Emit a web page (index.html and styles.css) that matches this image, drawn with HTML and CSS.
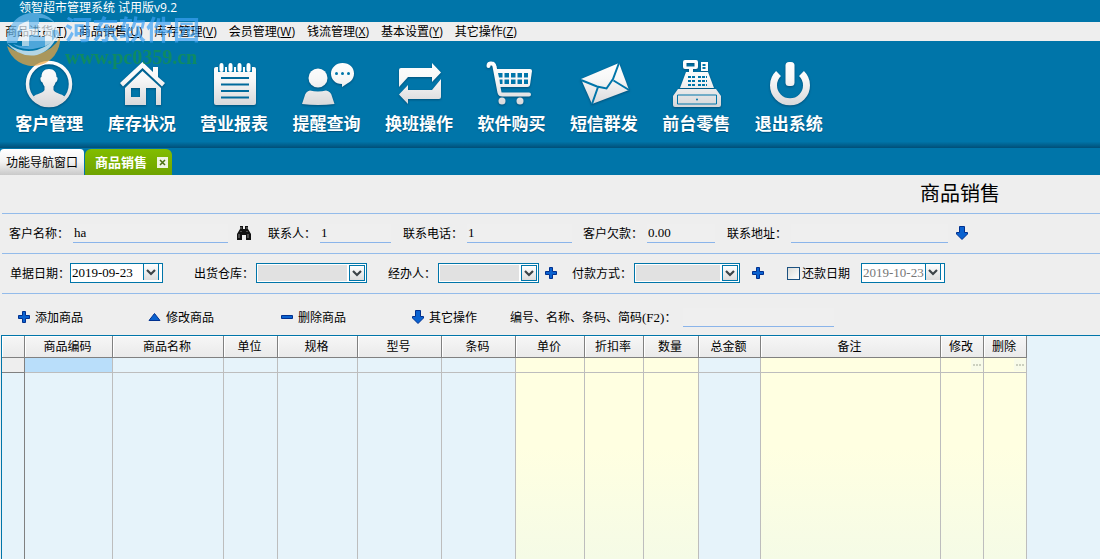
FILE: index.html
```html
<!DOCTYPE html>
<html lang="zh-CN">
<head>
<meta charset="utf-8">
<title>领智超市管理系统</title>
<link rel="stylesheet" href="styles.css">
</head>
<body>
<svg class="defs" aria-hidden="true">
  <defs>
    <linearGradient id="silver" gradientUnits="userSpaceOnUse" x1="0" y1="0" x2="0" y2="48"><stop offset="0" stop-color="#fff"/><stop offset=".4" stop-color="#f8f8f8"/><stop offset="1" stop-color="#d6d6d8"/></linearGradient>
    <symbol id="plus" viewBox="0 0 12 12"><path d="M4.500.5h3v4h4v3h-4v4h-3v-4h-4v-3h4z" fill="#0a62d0" stroke="#00308f"/></symbol>
    <symbol id="minus" viewBox="0 0 12 12"><path d="M.5 4.500h11v3H.5z" fill="#0a62d0" stroke="#00308f"/></symbol>
    <symbol id="up" viewBox="0 0 13 12"><path d="M6.500 2.500l5.500 7H1z" fill="#0a62d0" stroke="#00308f"/></symbol>
    <symbol id="down" viewBox="0 0 12 14"><path d="M3.500.5h5v6h3v1.500L6 13.500.5 8V6.500h3z" fill="#0a62d0" stroke="#00308f"/></symbol>
    <symbol id="chevron" viewBox="0 0 10 7"><path d="M1 1l4 4 4-4" fill="none" stroke="#3d4448" stroke-width="2.200"/></symbol>
  </defs>
</svg>

<header class="titlebar">领智超市管理系统 试用版v9.2</header>
<nav class="menubar">
  <button>商品进货(<u>T</u>)</button>
  <button>商品销售(<u>U</u>)</button>
  <button>库存管理(<u>V</u>)</button>
  <button>会员管理(<u>W</u>)</button>
  <button>钱流管理(<u>X</u>)</button>
  <button>基本设置(<u>Y</u>)</button>
  <button>其它操作(<u>Z</u>)</button>
</nav>

<div class="ribbon">
  <div class="ribbon-items">
    <button><svg viewBox="0 0 56 50"><circle cx="28" cy="25" r="21.500" fill="none" stroke="url(#silver)" stroke-width="3.500"/><path d="M28 10c5 0 7.500 3 7.500 8 2 0 1 5-1 5.500-.5 2-1.500 3-2 4V31c1 3 9 4 11 6.500C40 43 35 46.500 28 46.500S16 43 12.500 37.500c2-2.500 10-3.500 11-6.500v-3.500c-.5-1-1.500-2-2-4-2-.5-3-5.500-1-5.500 0-5 2.500-8 7.500-8z" fill="url(#silver)"/></svg><span>客户管理</span></button>
    <button><svg viewBox="0 0 56 50"><path fill="url(#silver)" d="M28.500 3L39 13V8h5v10l7 6-3 3.500L28.500 9 9 27.500 6 24z"/><path fill="url(#silver)" fill-rule="evenodd" d="M28.500 12L47 29v17h-5V29h-10v17H11V29zM17 29v9h9v-9z"/></svg><span>库存状况</span></button>
    <button><svg viewBox="0 0 56 50"><rect x="8" y="8" width="42" height="38" rx="2" fill="url(#silver)"/><g stroke="#0075a9" stroke-width="7"><path d="M15.500 7v6M24.500 7v6M33.500 7v6M42.500 7v6"/></g><path d="M15.500 6v5M24.500 6v5M33.500 6v5M42.500 6v5" stroke="#fff" stroke-width="4" stroke-linecap="round"/><path d="M15 19h28M15 25.500h28M15 32h28M15 38.500h28" stroke="#006a9c" stroke-width="2"/></svg><span>营业报表</span></button>
    <button><svg viewBox="0 0 56 50"><g fill="url(#silver)"><circle cx="19" cy="19" r="9.500"/><path d="M11 31.500q8 2 16 0 5 1 6 6l2.500 7.500Q19 47 3 45l2.500-7.500q1-5 5.500-6zM43.500 4c7 0 11.500 4.500 11.500 10.500S50 24 49 24l-6 4v-3c-7 0-11-5-11-10.500S37 4 43.500 4z"/></g><g fill="#0075a9"><circle cx="37.500" cy="14.500" r="1.500"/><circle cx="43.500" cy="14.500" r="1.500"/><circle cx="49.500" cy="14.500" r="1.500"/></g></svg><span>提醒查询</span></button>
    <button><svg viewBox="0 0 56 50"><path fill="url(#silver)" d="M10 9h31V4l9 9.500-9 9.500v-5H17L8 28V11q0-2 2-2zM50 20v18q0 2-2 2H17v5l-9-9.500L17 26v5h24z"/></svg><span>换班操作</span></button>
    <button><svg viewBox="0 0 56 50"><path d="M5.500 7q0-3 3-2.500 2.500 0 3 3l5 26q.5 2 3 2H46" fill="none" stroke="url(#silver)" stroke-width="4" stroke-linecap="round"/><path d="M12 10h35q2 0 2 2l-2 14q-.5 2-2.500 2H15z" fill="url(#silver)"/><g fill="#0075a9"><path d="M15 14h4.500v4.500H16zM21.500 14H26v4.500h-4.500zM28 14h4.500v4.500H28zM34.500 14H39v4.500h-4.500zM41 14h4v4.500h-4zM16.500 20.500h3V25h-2.500zM21.500 20.500H26V25h-4.500zM28 20.500h4.500V25H28zM34.500 20.500H39V25h-4.500zM41 20.500h4V25h-4z"/></g><g fill="url(#silver)"><circle cx="19" cy="42" r="3.500"/><circle cx="37" cy="42" r="3.500"/></g></svg><span>软件购买</span></button>
    <button><svg viewBox="0 0 56 50"><path d="M5 20L43 4l10 27-37 14z" fill="url(#silver)"/><path d="M5 21l16 6.500 9.500 2L37 20l6-16M16 45l6-17M53 31L37.500 21.500" fill="none" stroke="#0075a9" stroke-width="2"/></svg><span>短信群发</span></button>
    <button><svg viewBox="0 0 56 50"><path fill="url(#silver)" fill-rule="evenodd" d="M17 1h11q2 0 2 2v5q0 2-2 2h-3v3h15l6 16H12l6-16h3v-3h-4q-2 0-2-2V3q0-2 2-2zM18.500 4v3.500h8V4zM33 3h7v9h-7zM10 30h38l5 7v9q0 2-2 2H7q-2 0-2-2v-9z"/><path d="M34.500 6h4M34.500 9h3M20 18h8M20 22h8M20 26h8M30 18h9M30 22h9M30 26h9" stroke="#0075a9" stroke-width="2" stroke-dasharray="3 1"/><path d="M9.500 36h39v9h-39z" fill="none" stroke="#0075a9"/><circle cx="29" cy="40.500" r="1" fill="#0075a9"/></svg><span>前台零售</span></button>
    <button><svg viewBox="0 0 56 50"><path d="M17.500 14.500a16.500 16.500 0 1 0 23 0" fill="none" stroke="url(#silver)" stroke-width="7"/><rect x="24.500" y="3" width="9" height="24" rx="3.500" fill="url(#silver)"/></svg><span>退出系统</span></button>
  </div>
</div>

<div class="tabs">
  <button class="tab">功能导航窗口</button>
  <div class="tab active"><button class="tab-name">商品销售</button><button class="tab-close" aria-label="关闭"><svg viewBox="0 0 11 11"><path d="M3 3l5 5M8 3L3 8" stroke="#4a7012" stroke-width="1.500"/></svg></button></div>
</div>

<main>
  <h1>商品销售</h1>
  <form class="row party">
    <div class="field"><label for="cust">客户名称：</label><input id="cust" class="line w-155" value="ha"><button type="button" class="icon find" aria-label="查找"><svg viewBox="0 0 16 14" width="16" height="14"><path d="M4 0h3v3h2V0h3v3l3 5v6h-5V9H6v5H1V8l3-5z" fill="#111"/><path d="M5 1v2M11 1v2M3 8v4M12 8v4M5 5v1M11 5v1" stroke="#888"/></svg></button></div>
    <div class="field"><label for="man">联系人：</label><input id="man" class="line w-71" value="1"></div>
    <div class="field"><label for="tel">联系电话：</label><input id="tel" class="line w-105" value="1"></div>
    <div class="field"><label for="debt">客户欠款：</label><input id="debt" class="line w-68" value="0.00"></div>
    <div class="field"><label for="addr">联系地址：</label><input id="addr" class="line w-157"><button type="button" class="icon" aria-label="展开"><svg width="12" height="14"><use href="#down"/></svg></button></div>
  </form>
  <form class="row bill">
    <div class="field tight"><label for="date">单据日期：</label><span class="date w-93"><input id="date" value="2019-09-23"><button type="button" aria-label="选择日期"><svg width="10" height="7"><use href="#chevron"/></svg></button></span></div>
    <div class="field snug"><label for="store">出货仓库：</label><span class="combo w-111"><select id="store"></select><span class="drop"><svg width="10" height="7"><use href="#chevron"/></svg></span></span></div>
    <div class="field snug"><label for="agent">经办人：</label><span class="combo w-101"><select id="agent"></select><span class="drop"><svg width="10" height="7"><use href="#chevron"/></svg></span></span><button type="button" class="icon" aria-label="添加经办人"><svg width="12" height="12"><use href="#plus"/></svg></button></div>
    <div class="field snug"><label for="pay">付款方式：</label><span class="combo w-106"><select id="pay"></select><span class="drop"><svg width="10" height="7"><use href="#chevron"/></svg></span></span><button type="button" class="icon wide" aria-label="添加付款方式"><svg width="12" height="12"><use href="#plus"/></svg></button></div>
    <div class="field snug"><input type="checkbox" id="repay"><label for="repay">还款日期</label></div>
    <div class="field"><span class="date w-84"><input class="dim" aria-label="还款日期" value="2019-10-23"><button type="button" aria-label="选择日期"><svg width="10" height="7"><use href="#chevron"/></svg></button></span></div>
  </form>
  <div class="row actions">
    <button class="action"><svg width="12" height="12"><use href="#plus"/></svg>添加商品</button>
    <button class="action"><svg width="13" height="12"><use href="#up"/></svg>修改商品</button>
    <button class="action"><svg width="12" height="12"><use href="#minus"/></svg>删除商品</button>
    <button class="action"><svg width="12" height="14"><use href="#down"/></svg>其它操作</button>
    <div class="field search"><label for="code">编号、名称、条码、简码<span class="latin">(F2)</span>：</label><input id="code" class="line w-151"></div>
  </div>
  <div class="sheet">
    <table>
      <colgroup><col class="c-mark"><col class="c-code"><col class="c-name"><col class="c-unit"><col class="c-spec"><col class="c-model"><col class="c-bar"><col class="c-price"><col class="c-rate"><col class="c-qty"><col class="c-sum"><col class="c-note"><col class="c-act"><col class="c-act"></colgroup>
      <thead><tr><th></th><th>商品编码</th><th>商品名称</th><th>单位</th><th>规格</th><th>型号</th><th>条码</th><th>单价</th><th>折扣率</th><th>数量</th><th>总金额</th><th>备注</th><th>修改</th><th>删除</th></tr></thead>
      <tbody>
        <tr class="entry"><td class="mark"></td><td class="selected"></td><td></td><td></td><td></td><td></td><td></td><td class="edit"></td><td class="edit"></td><td class="edit"></td><td></td><td class="edit"></td><td class="edit"><button class="more" aria-label="修改"><i></i><i></i><i></i></button></td><td class="edit"><button class="more" aria-label="删除"><i></i><i></i><i></i></button></td></tr>
        <tr class="rest"><td></td><td></td><td></td><td></td><td></td><td></td><td></td><td class="edit"></td><td class="edit"></td><td class="edit"></td><td></td><td class="edit"></td><td class="edit"></td><td class="edit"></td></tr>
      </tbody>
    </table>
  </div>
</main>

<div class="watermark" aria-hidden="true">
  <svg viewBox="0 0 56 56" width="56" height="56"><path d="M2 34A27 27 0 0 0 55 25Q48 39 32 42 16 44 2 34z" fill="#f2a63c"/><path d="M2 31A27 27 0 0 1 50 11Q43 6 34 6V25l7-1V13h9l5 10Q46 35 28 37 14 38 8 32q8 3 16 2V13q-9 5-12 18z" fill="#6fbcf0"/><path d="M14 13l10-5v26h-7V17l-5 2zM24 17h9v6h-9zM33 12h19v6h-5v12l-7 4V18h-7z" fill="#eaf6fd"/><path d="M2 31q14 11 30 7 14-4 21-17-5 17-21 22Q14 46 2 31z" fill="#fff"/></svg>
  <div><div class="wm-name">河东软件园</div><div class="wm-url">www.pc0359.cn</div></div>
</div>
</body>
</html>
```
FILE: styles.css
```css
* { box-sizing: border-box; }
html { height: 100%; }
body {
  margin: 0;
  height: 100%;
  display: flex;
  flex-direction: column;
  overflow: hidden;
  background: #eee;
  color: #000;
  font: 12px/16px "Noto Sans CJK SC", sans-serif;
}
button, input, select { font: inherit; color: inherit; }
button { margin: 0; padding: 0; border: 0; background: none; white-space: nowrap; }
svg { display: block; flex: none; }
.defs { position: absolute; width: 0; height: 0; }

.titlebar {
  height: 22px;
  padding-left: 19px;
  background: #0075a9;
  color: #fff;
  font-family: "Open Sans", "Noto Sans CJK SC", sans-serif;
}
.menubar {
  display: flex;
  gap: 12px;
  height: 19px;
  padding-left: 5px;
  background: #eee;
  font-family: "Open Sans", "Noto Sans CJK SC", sans-serif;
}

.ribbon {
  height: 107px;
  padding: 18px 0 0 3px;
  background: linear-gradient(#0075a9 94%, #004f78);
}
.ribbon-items { display: grid; grid-template-columns: repeat(9, 1fr); max-width: 832px; }
.ribbon button {
  display: flex;
  flex-direction: column;
  align-items: center;
  gap: 2px;
  color: #fff;
  font-size: 17px;
  font-weight: 700;
  line-height: 24px;
}
.ribbon svg { width: 56px; height: 50px; filter: drop-shadow(0 1px 1px #00507a); }
.ribbon span { text-shadow: 0 1px 1px #00507a; }

.tabs { display: flex; gap: 1px; height: 27px; padding-top: 1px; background: #0075a9; }
.tab {
  display: flex;
  align-items: center;
  padding: 0 6px;
  border-radius: 4px 4px 0 0;
  background: linear-gradient(#fff, #f2f2f2 50%, #c9c9c9);
}
.tab.active { gap: 10px; padding: 0 4px 0 10px; border-radius: 6px 6px 0 0; background: linear-gradient(#82bd00, #6ea300); }
.tab-name { color: #fff; font-size: 13px; font-weight: 700; }
.tab-close { background: #eef4e2; }
.tab-close svg { width: 11px; height: 11px; }

main { flex: 1; min-height: 0; display: flex; flex-direction: column; }
h1 {
  margin: 0 100px 0 0;
  height: 38px;
  text-align: right;
  font-size: 20px;
  font-weight: 400;
  line-height: 36px;
}
.row {
  display: grid;
  align-items: center;
  margin-left: 2px;
  border-top: 1px solid #93bbea;
}
.party { height: 40px; padding: 0 0 1px 7px; grid-template-columns: 259px 135px 180px 144px auto; }
.bill { height: 40px; padding: 0 0 1px 8px; grid-template-columns: 184px 194px 184px 215px 74px auto; }
.actions { height: 42px; padding: 5px 0 0 16px; grid-template-columns: 130px 133px 131px 98px auto; }
.field { display: flex; align-items: center; gap: 4px; white-space: nowrap; }
.field.search { gap: 7px; }
.field.snug { gap: 2px; }
.field.tight { gap: 0; }
.line {
  height: 19px;
  padding: 0 1px;
  border: 0;
  border-bottom: 1px solid #8ab4ea;
  background: #efefef;
  font: 13px "Liberation Serif", serif;
}
.latin { font: 13px "Liberation Serif", serif; }
.icon { display: flex; justify-content: center; width: 20px; }
.icon.find { width: 24px; }
.icon.wide { width: 32px; }
.w-68 { width: 68px; }
.w-71 { width: 71px; }
.w-84 { width: 84px; }
.w-93 { width: 93px; }
.w-101 { width: 101px; }
.w-105 { width: 105px; }
.w-106 { width: 106px; }
.w-111 { width: 111px; }
.w-151 { width: 151px; }
.w-155 { width: 155px; }
.w-157 { width: 157px; }

.date, .combo {
  display: flex;
  position: relative;
  height: 20px;
  border: 1px solid #0075a9;
  background: #fff;
}
.date { padding-right: 3px; }
.date input {
  flex: 1;
  min-width: 0;
  padding: 0 0 0 1px;
  border: 0;
  background: none;
  font: 13px "Liberation Serif", serif;
}
.date .dim { color: #777; }
.date button, .drop {
  display: flex;
  align-items: center;
  justify-content: center;
  width: 16px;
  border: solid #0075a9;
  border-width: 0 1px;
  background: linear-gradient(#fff, #ddd);
}
.date button { height: 16px; }
.combo { padding: 1px; }
.combo select {
  flex: 1;
  appearance: none;
  border: 0;
  border-right: 18px solid #fff;
  border-radius: 0;
  background: #e1e1e1;
}
.drop { position: absolute; top: 1px; right: 1px; height: 16px; border-width: 1px; pointer-events: none; }
input[type="checkbox"] {
  appearance: none;
  width: 13px;
  height: 13px;
  margin: 0;
  border: 1px solid #1c5180;
  background: linear-gradient(135deg, #dcdcd8, #fff);
}
.action { display: flex; align-items: center; gap: 5px; }

.sheet {
  flex: 1;
  min-height: 0;
  display: flex;
  margin-left: 1px;
  border: solid #0075a9;
  border-width: 1px 0 0 1px;
  background: #e6f3fa;
}
table { flex: none; width: 1025px; table-layout: fixed; border-collapse: separate; border-spacing: 0; }
.c-mark { width: 23px; }
.c-code { width: 88px; }
.c-name { width: 111px; }
.c-unit { width: 54px; }
.c-spec { width: 80px; }
.c-model { width: 84px; }
.c-bar { width: 74px; }
.c-price { width: 69px; }
.c-rate { width: 59px; }
.c-qty { width: 55px; }
.c-sum { width: 62px; }
.c-note { width: 180px; }
.c-act { width: 43px; }
th, td { padding: 0; border: solid #bdbdbd; border-width: 0 1px 1px 0; }
th {
  height: 22px;
  padding: 0 2px 2px 0;
  border-color: #808080;
  background: linear-gradient(#f6f6f6, #eaeaea);
  box-shadow: inset 1px 1px #fff;
  font-weight: 400;
}
td:first-child { border-right-color: #808080; }
.entry td { height: 15px; line-height: 0; }
.entry .mark { background: #eee; border-bottom-color: #808080; }
.entry .selected { background: #b9defa; }
.entry .edit { background: #ffffe1; }
.rest td { border-bottom: 0; }
.rest .edit { background: linear-gradient(#ffffe1 40%, #f5fbe6); }
.more {
  display: flex;
  align-items: center;
  justify-content: center;
  gap: 1px;
  width: 12px;
  height: 12px;
  margin-left: auto;
  background: #f8fbe9;
}
.more i { width: 2px; height: 2px; background: #ccd0bf; }

.watermark { position: absolute; left: 5px; top: 12px; display: flex; gap: 4px; opacity: .7; pointer-events: none; }
.wm-name { color: #3da2f5; font-size: 27px; font-weight: 700; line-height: 34px; }
.wm-url { color: #159447; font: 700 20px/22px "Liberation Serif", serif; }
```
